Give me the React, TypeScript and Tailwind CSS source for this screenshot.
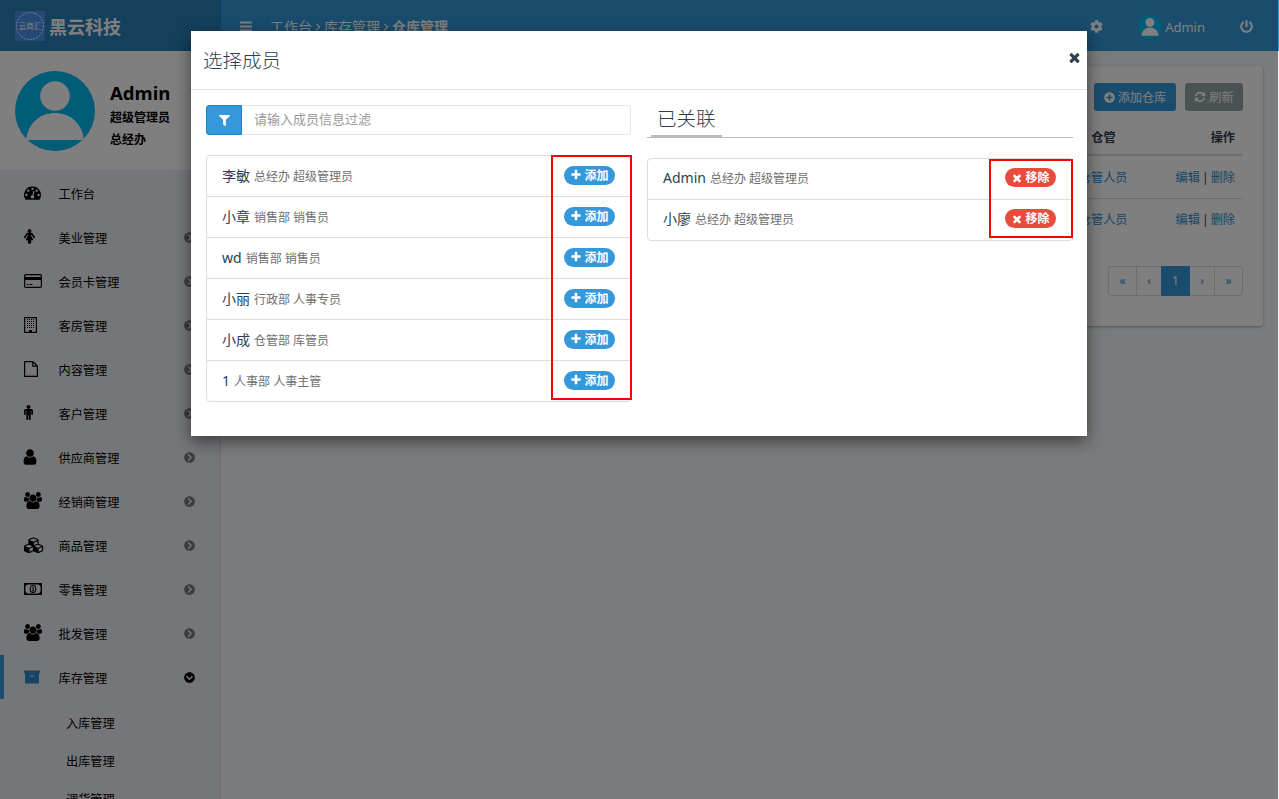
import React from "react";
import { FaChevronCircleRight, FaChevronCircleDown, FaCog, FaPowerOff, FaPlusCircle, FaFilter } from "react-icons/fa";

const PLUS = "M1600 736v192q0 40-28 68t-68 28h-416v416q0 40-28 68t-68 28h-192q-40 0-68-28t-28-68v-416h-416q-40 0-68-28t-28-68v-192q0-40 28-68t68-28h416v-416q0-40 28-68t68-28h192q40 0 68 28t28 68v416h416q40 0 68 28t28 68z";
const TIMES = "M1490 1322q0 40-28 68l-136 136q-28 28-68 28t-68-28l-294-294-294 294q-28 28-68 28t-68-28l-136-136q-28-28-28-68t28-68l294-294-294-294q-28-28-28-68t28-68l136-136q28-28 68-28t68 28l294 294 294-294q28-28 68-28t68 28l136 136q28 28 28 68t-28 68l-294 294 294 294q28 28 28 68z";
const GAUGE = "M384 1152q0-53-37.5-90.5t-90.5-37.5-90.5 37.5-37.5 90.5 37.5 90.5 90.5 37.5 90.5-37.5 37.5-90.5zm192-448q0-53-37.5-90.5t-90.5-37.5-90.5 37.5-37.5 90.5 37.5 90.5 90.5 37.5 90.5-37.5 37.5-90.5zm428 481l101-382q6-26-7.5-48.5t-38.5-29.5-48 6.5-30 39.5l-101 382q-60 5-107 43.5t-63 98.5q-20 77 20 146t117 89 146-20 89-117q16-60-6-117t-72-91zm660-33q0-53-37.5-90.5t-90.5-37.5-90.5 37.5-37.5 90.5 37.5 90.5 90.5 37.5 90.5-37.5 37.5-90.5zm-640-640q0-53-37.5-90.5t-90.5-37.5-90.5 37.5-37.5 90.5 37.5 90.5 90.5 37.5 90.5-37.5 37.5-90.5zm448 192q0-53-37.5-90.5t-90.5-37.5-90.5 37.5-37.5 90.5 37.5 90.5 90.5 37.5 90.5-37.5 37.5-90.5zm320 448q0 261-141 483-19 29-54 29h-1402q-35 0-54-29-141-221-141-483 0-182 71-348t191-286 286-191 348-71 348 71 286 191 191 286 71 348z";
const USER = "M1536 1399q0 109-62.5 187t-150.5 78h-854q-88 0-150.5-78t-62.5-187q0-85 8.5-160.5t31.5-152 58.5-131 94-89 134.5-34.5q131 128 313 128t313-128q76 0 134.5 34.5t94 89 58.5 131 31.5 152 8.5 160.5zm-256-887q0 159-112.5 271.5t-271.5 112.5-271.5-112.5-112.5-271.5 112.5-271.5 271.5-112.5 271.5 112.5 112.5 271.5z";
const USERS = "M593 896q-162 5-265 128h-134q-82 0-138-40.5t-56-118.5q0-353 124-353 6 0 43.5 21t97.5 42.5 119 21.5q67 0 133-23-5 37-5 66 0 139 81 256zm1071 637q0 120-73 189.5t-194 69.5h-874q-121 0-194-69.5t-73-189.5q0-53 3.5-103.5t14-109 26.5-108.5 43-97.5 62-81 85.5-53.5 111.5-20q10 0 43 21.5t73 48 107 48 135 21.5 135-21.5 107-48 73-48 43-21.5q61 0 111.5 20t85.5 53.5 62 81 43 97.5 26.5 108.5 14 109 3.5 103.5zm-1024-1277q0 106-75 181t-181 75-181-75-75-181 75-181 181-75 181 75 75 181zm704 384q0 159-112.5 271.5t-271.5 112.5-271.5-112.5-112.5-271.5 112.5-271.5 271.5-112.5 271.5 112.5 112.5 271.5zm576 225q0 78-56 118.5t-138 40.5h-134q-103-123-265-128 81-117 81-256 0-29-5-66 66 23 133 23 59 0 119-21.5t97.5-42.5 43.5-21q124 0 124 353zm-128-609q0 106-75 181t-181 75-181-75-75-181 75-181 181-75 181 75 75 181z";
const REFRESH = "M1639 1056q0 5-1 7-64 268-268 434.5t-478 166.5q-146 0-282.5-55t-243.5-157l-129 129q-19 19-45 19t-45-19-19-45v-448q0-26 19-45t45-19h448q26 0 45 19t19 45-19 45l-137 137q71 66 161 102t187 36q134 0 250-65t186-179q11-17 53-117 8-23 30-23h192q13 0 22.5 9.5t9.5 22.5zm25-800v448q0 26-19 45t-45 19h-448q-26 0-45-19t-19-45 19-45l138-138q-148-137-349-137-134 0-250 65t-186 179q-11 17-53 117-8 23-30 23h-199q-13 0-22.500-9.500t-9.500-22.500v-7q65-268 270-434.500t480-166.500q146 0 284 55.500t245 156.500l130-129q19-19 45-19t45 19 19 45z";
const FEMALE = "M1280 960q0 40-28 68t-68 28q-51 0-80-43l-227-341h-45v132l247 411q9 15 9 33 0 26-19 45t-45 19h-192v272q0 46-33 79t-79 33h-160q-46 0-79-33t-33-79v-272h-192q-26 0-45-19t-19-45q0-18 9-33l247-411v-132h-45l-227 341q-29 43-80 43-40 0-68-28t-28-68q0-29 16-53l256-384q73-107 176-107h384q103 0 176 107l256 384q16 24 16 53zm-416-736q0 93-65.500 158.500t-158.500 65.500-158.500-65.500-65.500-158.500 65.500-158.500 158.500-65.500 158.500 65.500 65.500 158.500z";
const MALE = "M1024 640v416q0 40-28 68t-68 28-68-28-28-68v-352h-64v912q0 46-33 79t-79 33-79-33-33-79v-464h-64v464q0 46-33 79t-79 33-79-33-33-79v-912h-64v352q0 40-28 68t-68 28-68-28-28-68v-416q0-80 56-136t136-56h640q80 0 136 56t56 136zm-288-416q0 93-65.500 158.500t-158.500 65.500-158.500-65.500-65.500-158.500 65.500-158.500 158.500-65.500 158.500 65.500 65.500 158.500z";
const CUBES = "M576 1664l384-192v-314l-384 164v342zm-64-454l404-173-404-173-404 173zm1088 454l384-192v-314l-384 164v342zm-64-454l404-173-404-173-404 173zm-448-293l384-165v-266l-384 164v267zm-64-379l441-189-441-189-441 189zm1088 518v416q0 36-19 67t-52 47l-448 224q-25 14-57 14t-57-14l-448-224q-4-2-7-4-2 2-7 4l-448 224q-25 14-57 14t-57-14l-448-224q-33-16-52-47t-19-67v-416q0-38 21.500-70t56.500-48l434-186v-400q0-38 21.500-70t56.500-48l448-192q23-10 50-10t50 10l448 192q35 16 56.500 48t21.500 70v400l434 186q36 16 57 48t21 70z";

function Glyph({ d, box = "0 0 1792 1792", className }: { d: string; box?: string; className: string }) {
  return (
    <svg viewBox={box} className={className} fill="currentColor">
      <path d={d} />
    </svg>
  );
}

function Avatar({ className }: { className: string }) {
  return (
    <svg viewBox="0 0 80 80" className={className}>
      <circle cx="40" cy="40" r="40" className="fill-[#00b8ee]" />
      <circle cx="40" cy="25" r="14.800" fill="#fff" />
      <path d="M11 69C13 52 25 42 40 42s27 10 29 27z" fill="#fff" />
    </svg>
  );
}

const CardIcon = () => (
  <svg viewBox="0 0 18 14" className="h-[14px] w-[18px]" fill="none" stroke="currentColor">
    <rect x=".6" y=".6" width="16.8" height="12.8" rx="1.2" strokeWidth="1.2" />
    <path d="M1 4.500h16" strokeWidth="3" />
    <path d="M2.500 10.500h2M5.500 10.500h3" />
  </svg>
);
const BuildingIcon = () => (
  <svg viewBox="0 0 13 16" className="h-[16px] w-[13px]" fill="none" stroke="currentColor">
    <rect x=".6" y=".6" width="11.800" height="14.800" strokeWidth="1.200" />
    <path d="M3.500 2v10M5.500 2v10M7.500 2v10M9.500 2v10" strokeDasharray="1 1" />
    <path d="M5 14h3" strokeWidth="2" />
  </svg>
);
const FileIcon = () => (
  <svg viewBox="0 0 14 16" className="h-[16px] w-[14px]" fill="none" stroke="currentColor" strokeWidth="1.200" strokeLinejoin="round">
    <path d="M.6.6h8.400l4.400 4.400v10.400H.6zM8.800.8v4.400h4.400" />
  </svg>
);
const MoneyIcon = () => (
  <svg viewBox="0 0 18 12" className="h-[12px] w-[18px]" fill="none" stroke="currentColor">
    <path d="M.7.7h16.600v10.600H.7z" strokeWidth="1.400" />
    <path d="M1 1h2.800L1 3.800zM17 1h-2.800L17 3.800zM1 11h2.800L1 8.200zM17 11h-2.800L17 8.200z" fill="currentColor" stroke="none" />
    <ellipse cx="9" cy="6" rx="2.800" ry="3.500" strokeWidth="1.100" />
    <path d="M8.300 4.600l.8-.5v3.700M8 7.900h2" strokeWidth="1" />
  </svg>
);
const ArchiveIcon = () => (
  <svg viewBox="0 0 16 14" className="h-[14px] w-[16px]" fill="currentColor">
    <path d="M.2.4h15.600v3.400H.2zM1 3.800h14v9.600H1z" />
    <path d="M6.200 6h3.600" stroke="#ebedf2" />
  </svg>
);

const menu = [
  { name: "工作台", icon: <Glyph d={GAUGE} className="size-[17px]" />, leaf: true },
  { name: "美业管理", icon: <Glyph d={FEMALE} box="0 0 1280 1728" className="h-[15px] w-[11px]" /> },
  { name: "会员卡管理", icon: <CardIcon /> },
  { name: "客房管理", icon: <BuildingIcon /> },
  { name: "内容管理", icon: <FileIcon /> },
  { name: "客户管理", icon: <Glyph d={MALE} box="0 0 1024 1728" className="h-[15px] w-[9px]" /> },
  { name: "供应商管理", icon: <Glyph d={USER} className="-ml-[3px] size-[18px]" /> },
  { name: "经销商管理", icon: <Glyph d={USERS} box="0 0 1920 1792" className="h-[17px] w-[18px]" /> },
  { name: "商品管理", icon: <Glyph d={CUBES} box="0 0 2176 1792" className="h-[16px] w-[20px]" /> },
  { name: "零售管理", icon: <MoneyIcon /> },
  { name: "批发管理", icon: <Glyph d={USERS} box="0 0 1920 1792" className="h-[17px] w-[18px]" /> },
  { name: "库存管理", icon: <ArchiveIcon />, open: true },
];

const members = [
  ["李敏", "总经办 超级管理员"],
  ["小章", "销售部 销售员"],
  ["wd", "销售部 销售员"],
  ["小丽", "行政部 人事专员"],
  ["小成", "仓管部 库管员"],
  ["1", "人事部 人事主管"],
];
const linked = [
  ["Admin", "总经办 超级管理员"],
  ["小廖", "总经办 超级管理员"],
];

function MemberRow({ name, detail, remove }: { name: string; detail: string; remove?: boolean }) {
  return (
    <li className="flex h-[41px] items-center border-b border-[#ddd] pl-[15px] last:h-[40px] last:border-b-0">
      <span className={remove ? "flex pb-px" : "flex"}>
        <span className="text-[14px] leading-[21px] text-[#2c3e50]">{name}</span>
        <span className="ml-1 pt-[1px] text-[12px] leading-[22px] text-[#6f6f6f]">{detail}</span>
      </span>
      <span
        className={
          remove
            ? "mr-[16px] mb-[3px] ml-auto flex h-[19px] w-[51px] items-center justify-center gap-[2px] rounded-full bg-[#e74c3c] text-[12px] leading-none font-bold text-white"
            : "mr-[15px] mb-[2px] ml-auto flex h-[19px] w-[51px] items-center justify-center gap-[2px] rounded-full bg-[#3498db] text-[12px] leading-none font-bold text-white"
        }
      >
        <Glyph d={remove ? TIMES : PLUS} className="size-[12px]" />
        <span className="pt-[1px]">{remove ? "移除" : "添加"}</span>
      </span>
    </li>
  );
}

function Sidebar() {
  return (
    <aside className="flex w-[221px] shrink-0 flex-col border-r border-[#dcdde0] bg-[#ebedf2]">
      <div className="flex h-[51px] w-[222px] shrink-0 items-center bg-[#2980b9] pl-[15px] text-white">
        <svg viewBox="0 0 30 30" className="size-[30px]">
          <rect width="30" height="30" fill="#4b93ee" />
          <circle cx="15" cy="15" r="13.500" fill="none" stroke="#fff" strokeWidth="1" strokeDasharray="2 1.200" />
          <text x="15" y="18" textAnchor="middle" fontSize="7.500" fill="#fff">云商汇</text>
        </svg>
        <span className="ml-[4px] pt-[3px] text-[18px] leading-6 font-bold">黑云科技</span>
      </div>
      <div className="flex h-[119px] shrink-0 items-start bg-white pt-5 pl-[15px] text-black">
        <Avatar className="size-20" />
        <div className="ml-[15px] pt-[10px] font-bold">
          <div className="text-[18.600px] leading-6">Admin</div>
          <div className="pt-[2px] text-[12px] leading-[22px]">超级管理员</div>
          <div className="text-[12px] leading-[22px]">总经办</div>
        </div>
      </div>
      <nav className="pt-[1px] text-[12.200px] text-black">
        {menu.map((m) => (
          <div
            key={m.name}
            className={m.open ? "flex h-11 items-center border-l-4 border-[#3498db] pl-5" : "flex h-11 items-center pl-6"}
          >
            <span className={m.open ? "flex w-[34.500px] pb-px text-[#2f8bc9]" : "flex w-[34.500px] pb-px"}>{m.icon}</span>
            <span className="pt-[5px]">{m.name}</span>
            {!m.leaf && (
              <span className="mr-[25px] ml-auto">
                {m.open ? <FaChevronCircleDown className="size-[11px]" /> : <FaChevronCircleRight className="size-[11px] text-[#747885]" />}
              </span>
            )}
          </div>
        ))}
        <div className="pt-[6px] pl-[66px]">
          {["入库管理", "出库管理", "调货管理"].map((s) => (
            <div key={s} className="flex h-[38px] items-center">{s}</div>
          ))}
        </div>
      </nav>
    </aside>
  );
}

const Crumb = () => (
  <svg viewBox="0 0 6 10" className="mx-[3px] h-[8px] w-[6px]" fill="none" stroke="currentColor" strokeWidth="1.500">
    <path d="M1 1l4 4-4 4" />
  </svg>
);

function Page() {
  return (
    <div className="flex h-[799px] w-[1279px] overflow-hidden">
      <Sidebar />
      <main className="flex min-w-0 flex-1 flex-col bg-[#f4f6f9]">
        <header className="flex h-[51px] shrink-0 items-center bg-[#3498db] pt-[2px] text-[14px] text-white">
          <svg viewBox="0 0 12 11" className="ml-[19px] h-[11px] w-[12px]" stroke="currentColor" strokeWidth="2">
            <path d="M0 1.500h12M0 5.500h12M0 9.500h12" />
          </svg>
          <div className="ml-[18px] flex items-center">
            工作台
            <Crumb />
            库存管理
            <Crumb />
            <b>仓库管理</b>
          </div>
          <div className="mr-[26px] ml-auto flex items-center">
            <FaCog className="size-[13px]" />
            <Avatar className="ml-[35px] size-6" />
            <span className="ml-[3px] pt-[2px] text-[13px]">Admin</span>
            <FaPowerOff className="ml-[35px] size-[13px]" />
          </div>
        </header>
        <section className="mt-[15px] mr-[16px] ml-[15px] h-[260px] rounded bg-white pt-[17px] pr-5 pl-5 shadow-[0_1px_3px_rgba(0,0,0,0.3)]">
          <div className="flex justify-end gap-[9px] text-[12.200px] text-white">
            <div className="flex h-7 w-[82px] items-center justify-center gap-[3px] rounded-[3px] bg-[#3498db]"><FaPlusCircle className="mt-px size-[11px]" /><span className="pt-[2px]">添加仓库</span></div>
            <div className="flex h-7 w-[58px] items-center justify-center gap-[3px] rounded-[3px] bg-[#95a5a6]"><Glyph d={REFRESH} className="size-[12px]" /><span className="pt-[2px]">刷新</span></div>
          </div>
          <div className="flex h-[45px] items-center justify-end border-b-2 border-[#dcdcdc] pt-3 pr-2 text-[12.200px] font-bold text-[#2c3e50]">
            <span className="mr-[95px]">仓管</span><span>操作</span>
          </div>
          {[0, 1].map((i) => (
            <div key={i} className={i === 0 ? "flex h-[43px] items-center justify-end border-b border-[#ddd] pt-[3px] pr-2 text-[12.200px] text-[#2c8acb]" : "flex h-[42px] items-center justify-end pt-px pr-2 text-[12.200px] text-[#2c8acb]"}>
              <span className="mr-[48px]">仓管人员</span>
              <span>编辑<span className="px-[2px] text-[#2c3e50]">|</span>删除</span>
            </div>
          ))}
          <div className="mt-[25px] ml-auto flex h-[30px] w-[135px] items-stretch rounded-[3px] border border-[#ddd] text-center text-[12px] leading-7 text-[#2c8acb]">
            <span className="w-7 border-r border-[#ddd]">«</span>
            <span className="w-[24px]">‹</span>
            <span className="-my-px w-[29px] bg-[#3498db] leading-[30px] text-white">1</span>
            <span className="w-[25px] border-r border-[#ddd]">›</span>
            <span className="flex-1">»</span>
          </div>
        </section>
      </main>
    </div>
  );
}

export default function App() {
  return (
    <div className="relative h-[799px] w-[1279px] overflow-hidden font-['Noto_Sans','Noto_Sans_CJK_SC',sans-serif]">
      <Page />
      <div className="absolute top-0 left-0 h-[799px] w-[1278px] bg-black/50" />
      <div className="absolute top-[31px] left-[191px] h-[405px] w-[896px] bg-white shadow-[0_5px_15px_rgba(0,0,0,0.5)]">
        <div className="flex h-[59px] items-center justify-between border-b border-[#e5e5e5] pr-[5px] pl-3">
          <h4 className="pt-px text-[19.500px] font-light text-[#2c3e50]">选择成员</h4>
          <Glyph d={TIMES} className="mb-[6px] size-[15px] text-[#2f4050]" />
        </div>
        <div className="flex gap-4 pt-[15px] pl-[15px]">
          <div className="w-[425px]">
            <div className="flex h-[30px]">
              <div className="flex w-9 items-center justify-center rounded-l-[3px] border border-[#1d82c9] bg-[#3498db] text-white"><FaFilter className="size-[11px]" /></div>
              <div className="flex flex-1 items-center rounded-r-[3px] border border-l-0 border-[#e4e7ea] pl-[12px] text-[13px] text-[#999]">请输入成员信息过滤</div>
            </div>
            <ul className="mt-5 rounded-[4px] border border-[#ddd]">
              {members.map(([n, d]) => <MemberRow key={n} name={n} detail={d} />)}
            </ul>
          </div>
          <div className="w-[426px]">
            <div className="flex h-[33px] items-start border-b border-[#bbb]">
              <span className="ml-1 h-[32px] border-b-2 border-[#bbb] px-[6px] text-[19.500px] leading-[28px] font-light text-[#2c3e50]">已关联</span>
            </div>
            <ul className="mt-5 rounded-[4px] border border-[#ddd]">
              {linked.map(([n, d]) => <MemberRow key={n} name={n} detail={d} remove />)}
            </ul>
          </div>
        </div>
      </div>
      <div className="absolute top-[155px] left-[551px] h-[245px] w-[81px] border-2 border-[#ff0000]" />
      <div className="absolute top-[159px] left-[989px] h-[79px] w-[84px] border-2 border-[#ff0000]" />
    </div>
  );
}
